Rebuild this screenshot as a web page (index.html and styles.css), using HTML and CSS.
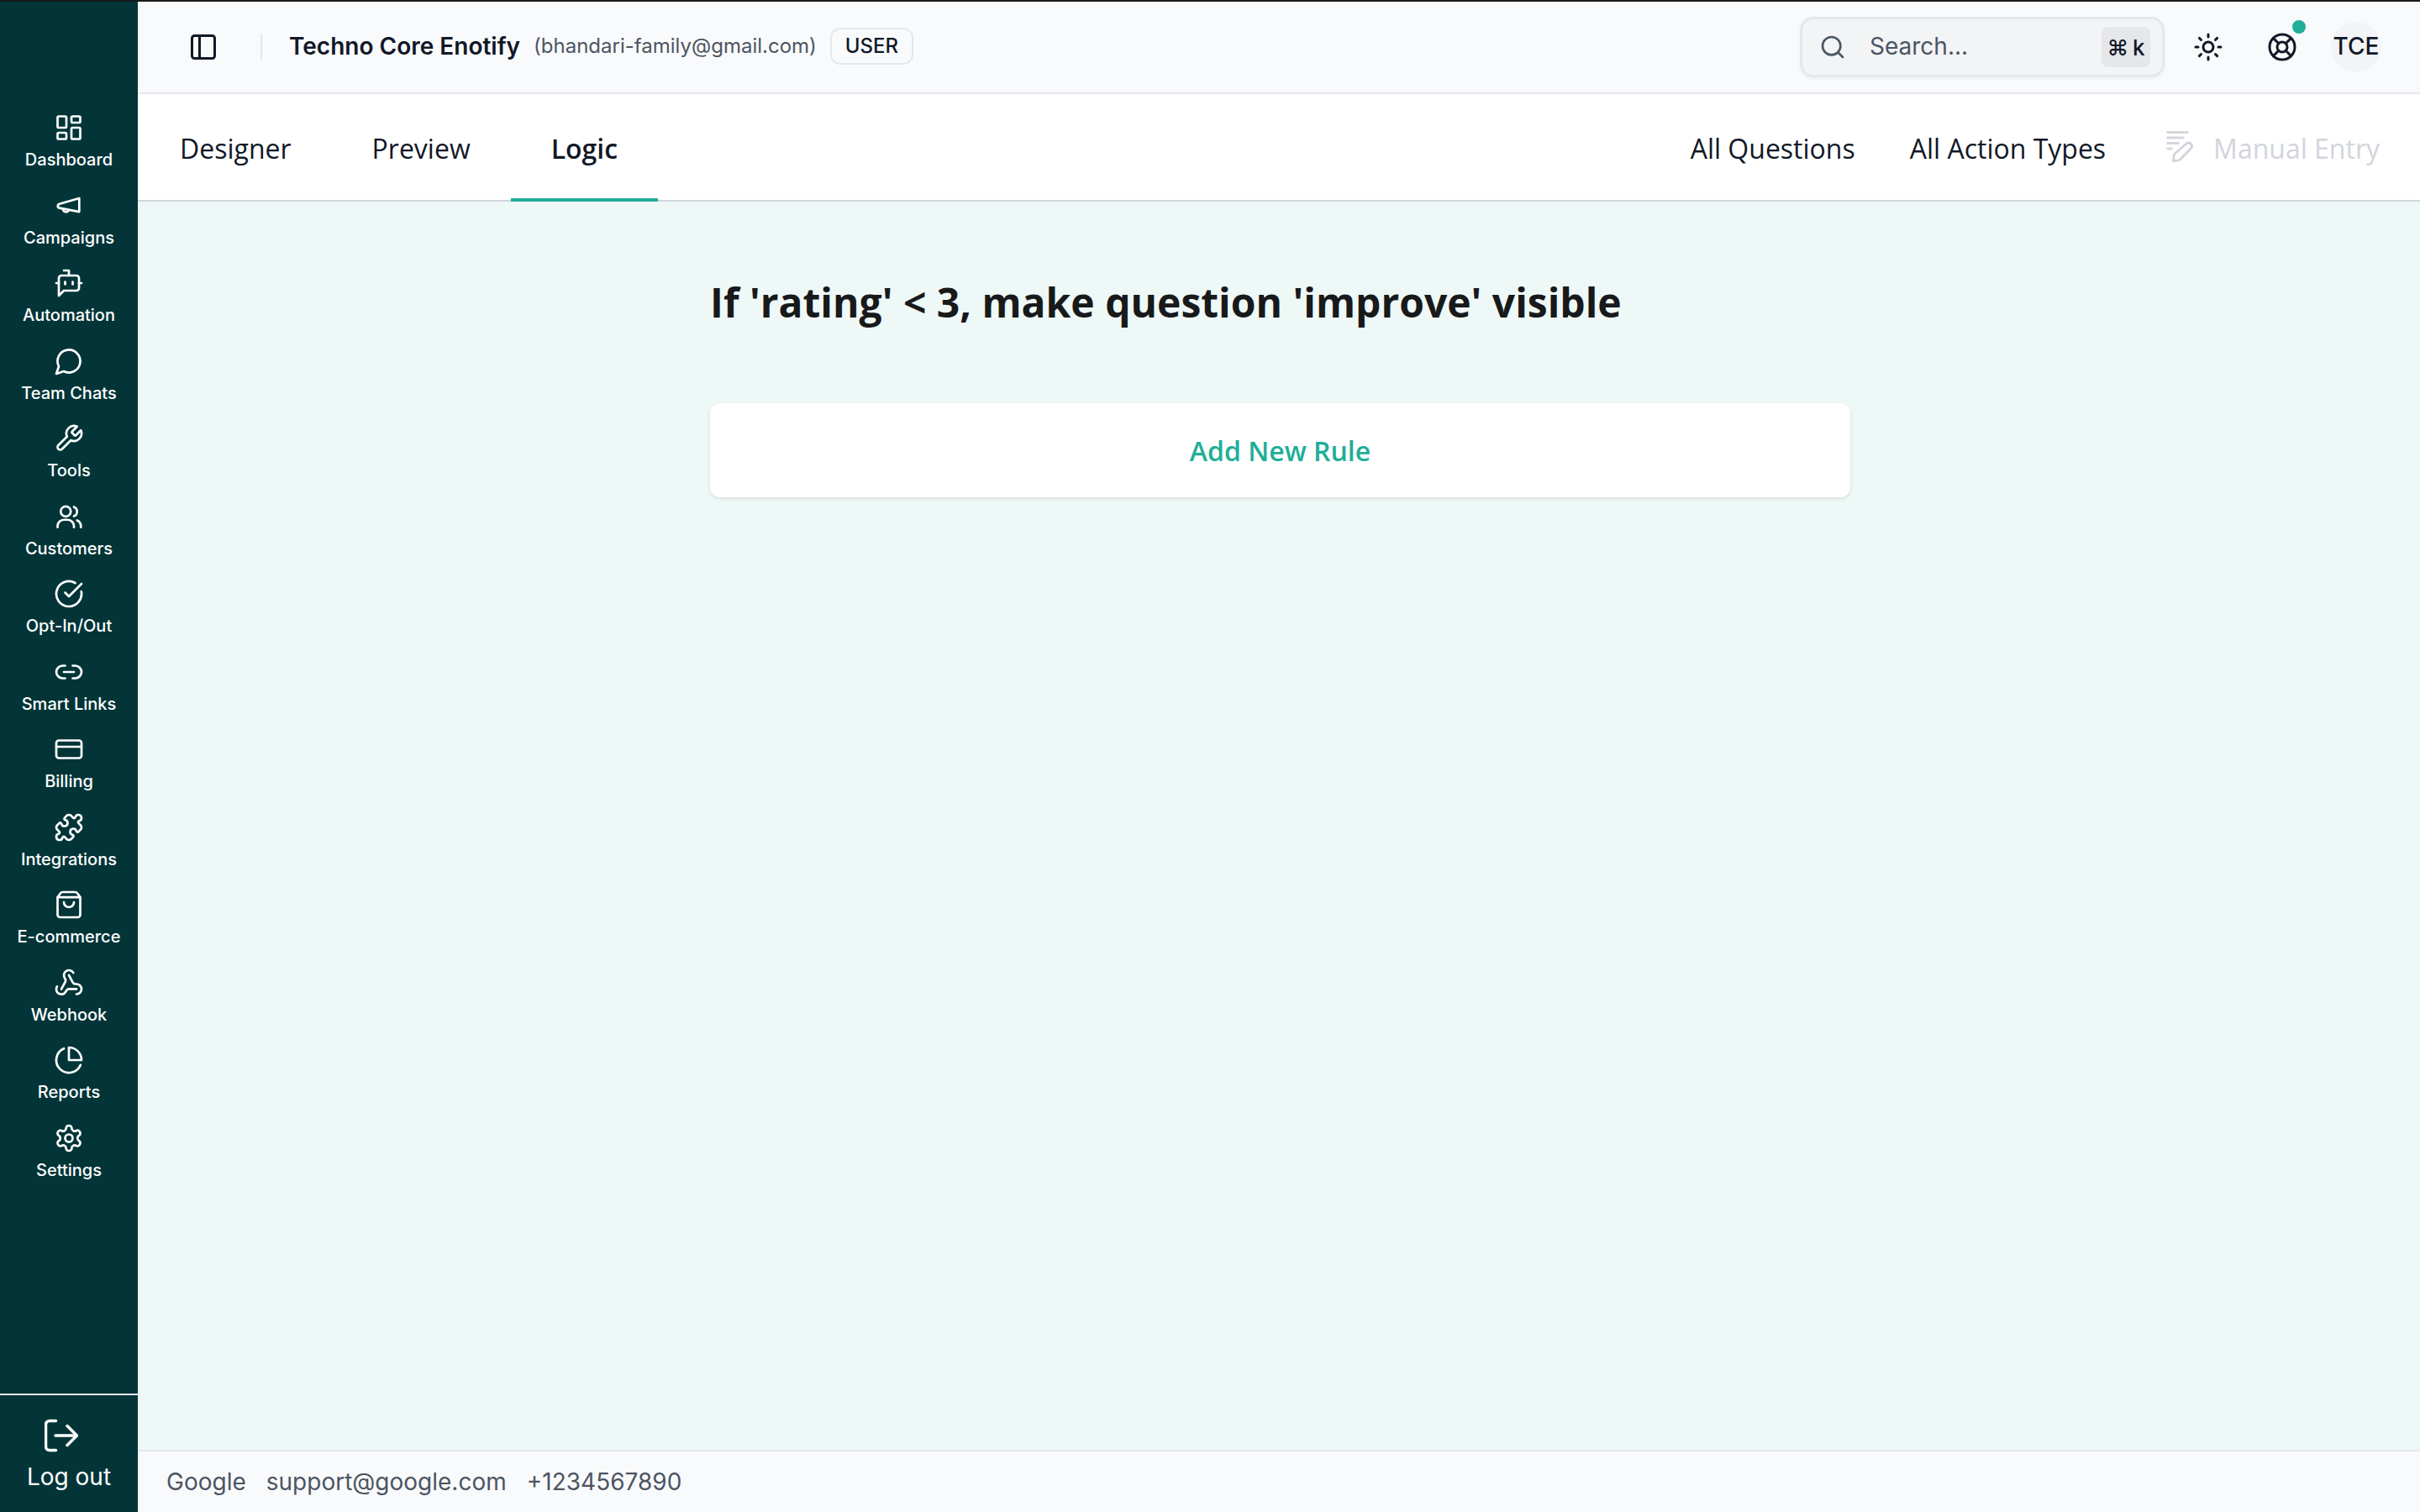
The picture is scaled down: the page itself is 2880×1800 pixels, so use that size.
FILE: index.html
```html
<!DOCTYPE html>
<html lang="en">
<head>
<meta charset="utf-8">
<title>Logic</title>
<link rel="stylesheet" href="styles.css">
</head>
<body>
<div class="app">
  <aside class="sidebar">
    <nav class="nav">
      <a class="nav-item"><svg class="nav-icon" viewBox="0 0 24 24"><rect x="3" y="3" width="7" height="9" rx="1"/><rect x="14" y="3" width="7" height="5" rx="1"/><rect x="14" y="12" width="7" height="9" rx="1"/><rect x="3" y="16" width="7" height="5" rx="1"/></svg><span>Dashboard</span></a>
      <a class="nav-item"><svg class="nav-icon" viewBox="0 0 24 24"><path d="M20.2 6 4.500 10.500a1.700 1.700 0 0 0 0 3.300l15.700 2.900z"/><path d="M7.300 14.700a2.500 2.500 0 0 0 4.600 1"/></svg><span>Campaigns</span></a>
      <a class="nav-item"><svg class="nav-icon" viewBox="0 0 24 24"><path d="M12 6V2H8"/><path d="m8 18-4 4V8a2 2 0 0 1 2-2h12a2 2 0 0 1 2 2v8a2 2 0 0 1-2 2Z"/><path d="M2 12h2"/><path d="M9 11v2"/><path d="M15 11v2"/><path d="M20 12h2"/></svg><span>Automation</span></a>
      <a class="nav-item"><svg class="nav-icon" viewBox="0 0 24 24"><path d="M7.9 20A9 9 0 1 0 4 16.1L2 22Z"/></svg><span>Team Chats</span></a>
      <a class="nav-item"><svg class="nav-icon" viewBox="0 0 24 24"><path d="M14.7 6.3a1 1 0 0 0 0 1.4l1.6 1.6a1 1 0 0 0 1.4 0l3.77-3.77a6 6 0 0 1-7.94 7.94l-6.91 6.91a2.12 2.12 0 0 1-3-3l6.91-6.91a6 6 0 0 1 7.94-7.94l-3.76 3.76z"/></svg><span>Tools</span></a>
      <a class="nav-item"><svg class="nav-icon" viewBox="0 0 24 24"><circle cx="9.500" cy="7.900" r="4"/><path d="M3 20.500v-1a5 5 0 0 1 5-5h3a5 5 0 0 1 5 5v1"/><path d="M16 4.300a4 4 0 0 1 0 7.400"/><path d="M21.500 20.500v-1a5 5 0 0 0-3-4.500"/></svg><span>Customers</span></a>
      <a class="nav-item"><svg class="nav-icon" viewBox="0 0 24 24"><path d="M21.801 10A10 10 0 1 1 17 3.335"/><path d="m9 11 3 3L22 4"/></svg><span>Opt-In/Out</span></a>
      <a class="nav-item"><svg class="nav-icon" viewBox="0 0 24 24"><path d="M9 17H7A5 5 0 0 1 7 7h2"/><path d="M15 7h2a5 5 0 1 1 0 10h-2"/><path d="M8 12h8"/></svg><span>Smart Links</span></a>
      <a class="nav-item"><svg class="nav-icon" viewBox="0 0 24 24"><rect x="2" y="5" width="20" height="14" rx="2"/><path d="M2 10h20"/></svg><span>Billing</span></a>
      <a class="nav-item"><svg class="nav-icon" viewBox="0 0 24 24"><path d="M15.39 4.39a1 1 0 0 0 1.68-.474 2.5 2.5 0 1 1 3.014 3.015 1 1 0 0 0-.474 1.68l1.683 1.682a2.414 2.414 0 0 1 0 3.414L19.61 15.39a1 1 0 0 1-1.68-.474 2.5 2.5 0 1 0-3.014 3.015 1 1 0 0 1 .474 1.68l-1.683 1.682a2.414 2.414 0 0 1-3.414 0L8.61 19.61a1 1 0 0 0-1.68.474 2.5 2.5 0 1 1-3.014-3.015 1 1 0 0 0 .474-1.68l-1.683-1.682a2.414 2.414 0 0 1 0-3.414L4.39 8.61a1 1 0 0 1 1.68.474 2.5 2.5 0 1 0 3.014-3.015 1 1 0 0 1-.474-1.68l1.683-1.682a2.414 2.414 0 0 1 3.414 0z"/></svg><span>Integrations</span></a>
      <a class="nav-item"><svg class="nav-icon" viewBox="0 0 24 24"><path d="M16 10a4 4 0 0 1-8 0"/><path d="M3.103 6.034h17.794"/><path d="M3.4 5.467a2 2 0 0 0-.4 1.2V20a2 2 0 0 0 2 2h14a2 2 0 0 0 2-2V6.667a2 2 0 0 0-.4-1.2l-2-2.667A2 2 0 0 0 17 2H7a2 2 0 0 0-1.6.8z"/></svg><span>E-commerce</span></a>
      <a class="nav-item"><svg class="nav-icon" viewBox="0 0 24 24"><path d="M18 16.98h-5.99c-1.1 0-1.95.94-2.48 1.9A4 4 0 0 1 2 17c.01-.7.2-1.4.57-2"/><path d="m6 17 3.13-5.78c.53-.97.1-2.18-.5-3.1a4 4 0 1 1 6.89-4.06"/><path d="m12 6 3.13 5.73C15.66 12.7 16.9 13 18 13a4 4 0 0 1 0 8"/></svg><span>Webhook</span></a>
      <a class="nav-item"><svg class="nav-icon" viewBox="0 0 24 24"><path d="M21.21 15.89A10 10 0 1 1 8 2.83"/><path d="M22 12A10 10 0 0 0 12 2v10z"/></svg><span>Reports</span></a>
      <a class="nav-item"><svg class="nav-icon" viewBox="0 0 24 24"><path d="M12.22 2h-.44a2 2 0 0 0-2 2v.18a2 2 0 0 1-1 1.73l-.43.25a2 2 0 0 1-2 0l-.15-.08a2 2 0 0 0-2.73.73l-.22.38a2 2 0 0 0 .73 2.73l.15.1a2 2 0 0 1 1 1.72v.51a2 2 0 0 1-1 1.74l-.15.09a2 2 0 0 0-.73 2.73l.22.38a2 2 0 0 0 2.73.73l.15-.08a2 2 0 0 1 2 0l.43.25a2 2 0 0 1 1 1.73V20a2 2 0 0 0 2 2h.44a2 2 0 0 0 2-2v-.18a2 2 0 0 1 1-1.73l.43-.25a2 2 0 0 1 2 0l.15.08a2 2 0 0 0 2.73-.73l.22-.39a2 2 0 0 0-.73-2.73l-.15-.08a2 2 0 0 1-1-1.74v-.5a2 2 0 0 1 1-1.74l.15-.09a2 2 0 0 0 .73-2.73l-.22-.38a2 2 0 0 0-2.73-.73l-.15.08a2 2 0 0 1-2 0l-.43-.25a2 2 0 0 1-1-1.73V4a2 2 0 0 0-2-2z"/><circle cx="12" cy="12" r="3"/></svg><span>Settings</span></a>
    </nav>
    <a class="logout">
      <svg class="logout-icon" viewBox="0 0 40 40"><path d="M13.500 2.500H6A4.500 4.500 0 0 0 1.500 7v26A4.500 4.500 0 0 0 6 37.500h7.500"/><path d="M13 20h25"/><path d="M27 8.500 38.500 20 27 31.500"/></svg>
      <span>Log out</span>
    </a>
  </aside>
  <div class="main">
    <header class="topbar">
      <svg class="panel-icon" viewBox="0 0 24 24"><rect x="3" y="3" width="18" height="18" rx="2"/><path d="M9 3v18"/></svg>
      <span class="divider"></span>
      <strong class="org">Techno Core Enotify</strong>
      <span class="email">(bhandari-family@gmail.com)</span>
      <span class="role">USER</span>
      <div class="top-actions">
        <div class="search">
          <svg class="search-icon" viewBox="0 0 24 24"><circle cx="11" cy="11" r="8"/><path d="m21 21-4.3-4.300"/></svg>
          <span class="search-text">Search...</span>
          <kbd class="kbd">⌘ k</kbd>
        </div>
        <svg class="sun-icon" viewBox="0 0 24 24"><circle cx="12" cy="12" r="4"/><path d="M12 2v2"/><path d="M12 20v2"/><path d="m4.930 4.930 1.410 1.410"/><path d="m17.660 17.660 1.410 1.410"/><path d="M2 12h2"/><path d="M20 12h2"/><path d="m6.340 17.660-1.410 1.410"/><path d="m19.070 4.930-1.410 1.410"/></svg>
        <div class="help">
          <svg class="help-icon" viewBox="0 0 24 24"><circle cx="12" cy="12" r="10"/><path d="m4.930 4.930 4.240 4.240"/><path d="m14.830 9.170 4.240-4.240"/><path d="m14.830 14.830 4.240 4.240"/><path d="m9.170 14.830-4.240 4.240"/><circle cx="12" cy="12" r="4"/></svg>
          <span class="dot"></span>
        </div>
        <span class="avatar">TCE</span>
      </div>
    </header>
    <div class="tabbar">
      <div class="tabs">
        <a class="tab">Designer</a>
        <a class="tab">Preview</a>
        <a class="tab active">Logic</a>
      </div>
      <div class="tools">
        <a class="tool">All Questions</a>
        <a class="tool">All Action Types</a>
        <a class="tool disabled">
          <svg class="entry-icon" viewBox="0 0 34 38"><path d="M1.500 1.500h26"/><path d="M1.500 8h21"/><path d="M1.500 14.500h15"/><path d="M1.500 21h7"/><path d="M10.500 27.500 25 15a4 4 0 0 1 6 5L17 34.500 9.500 36z"/></svg>
          Manual Entry
        </a>
      </div>
    </div>
    <main class="content">
      <div class="rules">
        <h1 class="rule-title">If 'rating' &lt; 3, make question 'improve' visible</h1>
        <button class="add-rule">Add New Rule</button>
      </div>
    </main>
    <footer class="footer">
      <span>Google</span>
      <span>support@google.com</span>
      <span>+1234567890</span>
    </footer>
  </div>
</div>
</body>
</html>
```

FILE: styles.css
```css
* { box-sizing: border-box; }
html, body { margin: 0; height: 100%; overflow: hidden; }
body { font-family: "Inter", "Liberation Sans", sans-serif; color: #111827; }

.app { display: flex; height: 1800px; border-top: 2px solid #18191b; }

.sidebar { width: 164px; flex: none; background: #033538; color: #fff; display: flex; flex-direction: column; }
.nav { flex: 1; padding-top: 132px; display: flex; flex-direction: column; }
.nav-item { height: 92.500px; flex: none; display: flex; flex-direction: column; align-items: center; font-size: 20px; line-height: 28px; font-weight: 500; }
.nav-item span { margin-top: 6px; }
.nav-icon { width: 36px; height: 36px; fill: none; stroke: #fff; stroke-width: 1.800; stroke-linecap: round; stroke-linejoin: round; }

.logout { height: 141px; flex: none; border-top: 2px solid #e5e7eb; display: flex; flex-direction: column; align-items: center; padding-top: 28px; font-size: 28px; line-height: 36px; font-weight: 400; }
.logout span { margin-top: 11px; }
.logout-icon { width: 40px; height: 40px; fill: none; stroke: #fff; stroke-width: 3.500; stroke-linecap: round; stroke-linejoin: round; margin-left: -18px; }

.main { flex: 1; min-width: 0; display: flex; flex-direction: column; }

.topbar { height: 110px; flex: none; background: #f9fafb; border-bottom: 2px solid #e5e7eb; display: flex; align-items: center; padding: 0 46px 0 60px; }
.panel-icon { width: 36px; height: 36px; fill: none; stroke: #111827; stroke-width: 2; stroke-linecap: round; stroke-linejoin: round; }
.divider { width: 2px; height: 32px; background: #e5e7eb; margin: 0 32px 0 50px; }
.org { font-size: 28px; font-weight: 600; line-height: 36px; margin-bottom: 2px; }
.email { font-size: 24px; line-height: 32px; color: #4b5563; margin-left: 16px; margin-bottom: 2px; }
.role { font-size: 24px; line-height: 40px; font-weight: 500; border: 2px solid #e5e7eb; border-radius: 12px; padding: 0 16px; margin-left: 16px; height: 44px; margin-bottom: 2px; }

.top-actions { margin-left: auto; display: flex; align-items: center; }
.search { width: 434px; height: 72px; background: #f3f4f6; border: 3px solid #e5e7eb; border-radius: 16px; display: flex; align-items: center; padding: 0 14px 0 20px; box-shadow: 0 2px 4px rgba(0,0,0,.05); }
.search-icon { width: 32px; height: 32px; fill: none; stroke: #4b5563; stroke-width: 2; stroke-linecap: round; stroke-linejoin: round; }
.search-text { font-size: 28px; color: #4b5563; margin-left: 28px; margin-bottom: 2px; }
.kbd { margin-left: auto; width: 58px; height: 48px; border-radius: 8px; background: #e5e7eb; display: flex; align-items: center; justify-content: center; font-family: "Inter", sans-serif; font-size: 26px; font-weight: 500; word-spacing: -2px; color: #111827; }
.sun-icon, .help-icon { width: 36px; height: 36px; fill: none; stroke: #111827; stroke-width: 2; stroke-linecap: round; stroke-linejoin: round; display: block; }
.sun-icon { margin-left: 34px; }
.help { margin-left: 52px; position: relative; }
.dot { position: absolute; top: -14px; right: -10px; width: 16px; height: 16px; border-radius: 50%; background: #20ae98; }
.avatar { margin-left: 40px; width: 60px; height: 60px; border-radius: 50%; background: #f3f4f6; display: flex; align-items: center; justify-content: center; font-size: 28px; font-weight: 500; padding-bottom: 2px; }

.tabbar { height: 128px; flex: none; background: #fff; border-bottom: 2px solid #d1d5db; display: flex; justify-content: space-between; font-family: "Open Sans", sans-serif; font-size: 32px; color: #111827; padding-left: 2px; }
.tabs { display: flex; }
.tab { padding: 0 48px; display: flex; align-items: center; height: 128px; }
.tab.active { font-weight: 600; border-bottom: 4px solid #20ae98; padding-top: 4px; }
.tools { display: flex; align-items: center; padding: 2px 48px 0 0; gap: 65px; }
.tool { display: flex; align-items: center; }
.tool.disabled { color: #d1d5db; margin-left: 6px; gap: 23px; }
.entry-icon { width: 34px; height: 38px; fill: none; stroke: #d1d5db; stroke-width: 2.800; stroke-linejoin: round; stroke-linecap: butt; margin-top: -2px; }

.content { flex: 1; min-height: 0; background: #eef8f6; display: flex; justify-content: center; padding-top: 88px; }
.rules { width: 1357px; margin-left: 3px; }
.rule-title { font-family: "Open Sans", sans-serif; font-size: 48px; line-height: 64px; font-weight: 700; color: #18191b; margin: 0 0 88px; }
.add-rule { display: block; width: 100%; height: 112px; background: #fff; border: 0; border-radius: 12px; box-shadow: 0 2px 4px rgba(0,0,0,.1); font-family: "Open Sans", sans-serif; font-size: 32px; font-weight: 600; color: #20ae98; }

.footer { height: 74px; flex: none; background: #f9fafb; border-top: 2px solid #e5e7eb; display: flex; align-items: center; gap: 24px; padding-left: 34px; font-size: 28px; color: #4b5563; }
```
